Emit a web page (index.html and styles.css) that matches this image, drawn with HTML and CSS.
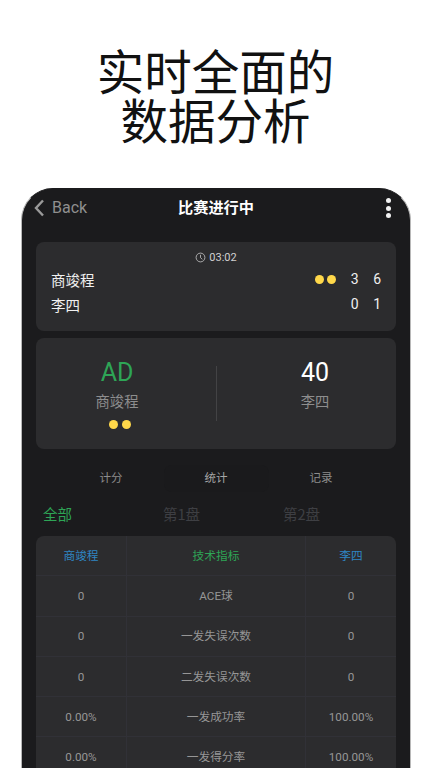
FILE: index.html
```html
<!DOCTYPE html>
<html lang="zh">
<head>
<meta charset="utf-8">
<title>实时全面的数据分析</title>
<link rel="stylesheet" href="styles.css">
</head>
<body>
<h1 class="headline">实时全面的<br>数据分析</h1>
<main class="phone">
  <header class="topbar">
    <div class="back">
      <svg class="chev" viewBox="0 0 12 18" width="12" height="18"><path d="M10 1.5 L3 9 L10 16.5" fill="none" stroke="#9a9a9a" stroke-width="2.4"/></svg>
      <span>Back</span>
    </div>
    <div class="title">比赛进行中</div>
    <div class="more"><i></i><i></i><i></i></div>
  </header>

  <section class="card score">
    <div class="clock">
      <svg viewBox="0 0 12 12" width="11" height="11"><circle cx="6" cy="6" r="4.8" fill="none" stroke="#c4c4c4" stroke-width="0.9"/><path d="M6 3 V6.2 L8 8" fill="none" stroke="#c4c4c4" stroke-width="0.9"/></svg>
      <span>03:02</span>
    </div>
    <div class="srow">
      <span class="sname">商竣程</span>
      <span class="balls"><i class="ball"></i><i class="ball"></i></span>
      <span class="snum">3</span><span class="snum">6</span>
    </div>
    <div class="srow">
      <span class="sname">李四</span>
      <span class="snum">0</span><span class="snum">1</span>
    </div>
  </section>

  <section class="card game">
    <div class="side">
      <div class="pts green">AD</div>
      <div class="pname">商竣程</div>
      <div class="balls"><i class="ball"></i><i class="ball"></i></div>
    </div>
    <div class="divider"></div>
    <div class="side">
      <div class="pts">40</div>
      <div class="pname">李四</div>
    </div>
  </section>

  <nav class="tabs">
    <span class="tab">计分</span>
    <span class="tab on">统计</span>
    <span class="tab">记录</span>
  </nav>

  <nav class="sets">
    <span class="set on">全部</span>
    <span class="set">第1盘</span>
    <span class="set">第2盘</span>
  </nav>

  <section class="table">
    <div class="row head"><span class="blue">商竣程</span><span class="green">技术指标</span><span class="blue">李四</span></div>
    <div class="row"><span>0</span><span>ACE球</span><span>0</span></div>
    <div class="row"><span>0</span><span>一发失误次数</span><span>0</span></div>
    <div class="row"><span>0</span><span>二发失误次数</span><span>0</span></div>
    <div class="row"><span>0.00%</span><span>一发成功率</span><span>100.00%</span></div>
    <div class="row"><span>0.00%</span><span>一发得分率</span><span>100.00%</span></div>
  </section>
</main>
</body>
</html>
```
FILE: styles.css
```css
* { box-sizing: border-box; }
html, body { margin: 0; height: 768px; overflow: hidden; background: #fff; }
body { font-family: Roboto, "Noto Sans CJK SC", sans-serif; }
.headline {
  margin: 0;
  padding: 45px 1px 0 0;
  height: 188px;
  font: 400 47.5px/49px "Noto Sans CJK SC", sans-serif;
  color: #111;
  text-align: center;
}
.phone {
  width: 390px;
  height: 580px;
  margin-left: 21px;
  padding: 0 14px;
  background: #1b1b1d;
  border: 1px solid #b8b8b8;
  border-top-color: #1b1b1d;
  border-bottom: 0;
  border-radius: 32px 32px 0 0;
}
.topbar {
  height: 53px;
  padding-top: 7px;
  display: grid;
  grid-template-columns: 1fr auto 1fr;
  align-items: start;
}
.back {
  display: flex;
  align-items: center;
  gap: 7px;
  height: 24px;
  margin-left: -3px;
  font-size: 16px;
  line-height: 24px;
  color: #8f8f8f;
}
.title {
  height: 24px;
  margin-top: -2px;
  font: 700 15.2px/24px "Noto Sans CJK SC", sans-serif;
  color: #fff;
}
.more {
  justify-self: end;
  margin-right: 5px;
  padding-top: 2px;
  display: flex;
  flex-direction: column;
  gap: 2.5px;
}
.more i { width: 5px; height: 5px; border-radius: 50%; background: #f2f2f2; }
.card { background: #2c2c2e; border-radius: 8px; }
.score { height: 89px; padding-top: 8px; }
.clock {
  display: flex;
  justify-content: center;
  align-items: center;
  gap: 3px;
  height: 15px;
  font-size: 11px;
  color: #d0d0d0;
}
.srow {
  display: flex;
  align-items: center;
  height: 25px;
  padding: 0 15px;
  color: #f0f0f0;
  font: 400 14.5px/25px "Noto Sans CJK SC", sans-serif;
}
.clock + .srow { margin-top: 2px; }
.sname { margin-right: auto; }
.snum { width: 19px; margin-left: 3.5px; text-align: right; font-family: Roboto, sans-serif; font-size: 14px; }
.balls { display: flex; gap: 3.5px; }
.ball { width: 9px; height: 9px; border-radius: 50%; background: #ffd84a; }
.game {
  margin-top: 7px;
  height: 111px;
  display: flex;
  justify-content: space-between;
  align-items: center;
}
.side { width: 162px; align-self: flex-start; display: flex; flex-direction: column; align-items: center; padding-top: 18px; }
.pts { font: 400 25px/33px Roboto, sans-serif; color: #fff; height: 33px; }
.pts.green { color: #2ea556; }
.pname { font: 400 14.3px/24px "Noto Sans CJK SC", sans-serif; color: #8e8e8e; height: 24px; }
.game .balls { margin: 7px 0 0 5px; gap: 4px; }
.divider { width: 1px; height: 55px; background: #434345; }
.tabs {
  height: 27px;
  margin-top: 16px;
  display: flex;
  justify-content: center;
}
.tab {
  width: 105px;
  height: 27px;
  text-align: center;
  font: 400 11.5px/25px "Noto Sans CJK SC", sans-serif;
  color: #8c8c8c;
  border-radius: 8px;
}
.tab.on { background: #1a1a1c; color: #a6a6a6; }
.sets { display: flex; height: 36px; margin-top: 3px; margin-bottom: 5px; padding-left: 7px; }
.set { flex: none; width: 120px; font: 400 14.5px/37px "Noto Sans CJK SC", sans-serif; color: #3e3f43; }
.set.on { color: #2ea556; }
.table { background: #2c2c2e; border-radius: 8px 8px 0 0; overflow: hidden; }
.row {
  display: grid;
  grid-template-columns: 90px 179px 91px;
  height: 40.3px;
  border-bottom: 1px solid #313137;
  font: 400 11.7px/20px Roboto, "Noto Sans CJK SC", sans-serif;
  color: #969696;
  text-align: center;
}
.row span { display: flex; align-items: center; justify-content: center; }
.row span + span { border-left: 1px solid #313137; }
.row .blue { color: #2f86c4; }
.row .green { color: #2ea556; }
```
